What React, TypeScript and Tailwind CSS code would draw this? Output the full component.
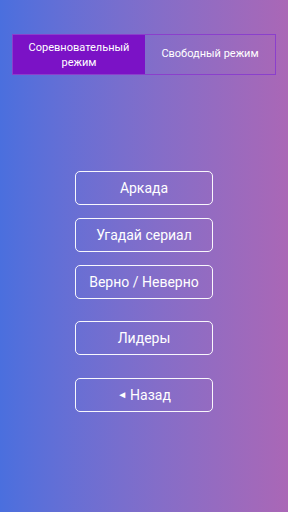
import React from 'react';

const MenuButton: React.FC<{ children: React.ReactNode }> = ({ children }) => (
    <button className="w-[138px] h-[34px] rounded-[5px] border-[1.5px] border-white/95 text-white text-[14px] leading-none flex items-center justify-center">
        {children}
    </button>
);

export default function App() {
    return (
        <div
            className="w-[288px] h-[512px] flex flex-col items-center bg-gradient-to-r from-[#4a6fde] to-[#aa67b6] text-white"
            style={{ fontFamily: 'Roboto, "Noto Sans", sans-serif' }}
        >
            <div className="mt-[34px] w-[264px] h-[41px] flex border border-[#8b3fcc]">
                <div className="w-[132px] bg-[#7b12c6] flex items-center justify-center text-center text-[11px] leading-[15px]">
                    Соревновательный<br />режим
                </div>
                <div className="flex-1 flex items-center justify-center text-[11px]">
                    Свободный режим
                </div>
            </div>

            <div className="mt-[96px] flex flex-col items-center">
                <MenuButton>Аркада</MenuButton>
                <div className="h-[13px]" />
                <MenuButton>Угадай сериал</MenuButton>
                <div className="h-[13px]" />
                <MenuButton>Верно / Неверно</MenuButton>
                <div className="h-[22px]" />
                <MenuButton>Лидеры</MenuButton>
                <div className="h-[23px]" />
                <MenuButton>
                    <span className="text-[10px] mr-[3px]">◄</span>Назад
                </MenuButton>
            </div>
        </div>
    );
}
